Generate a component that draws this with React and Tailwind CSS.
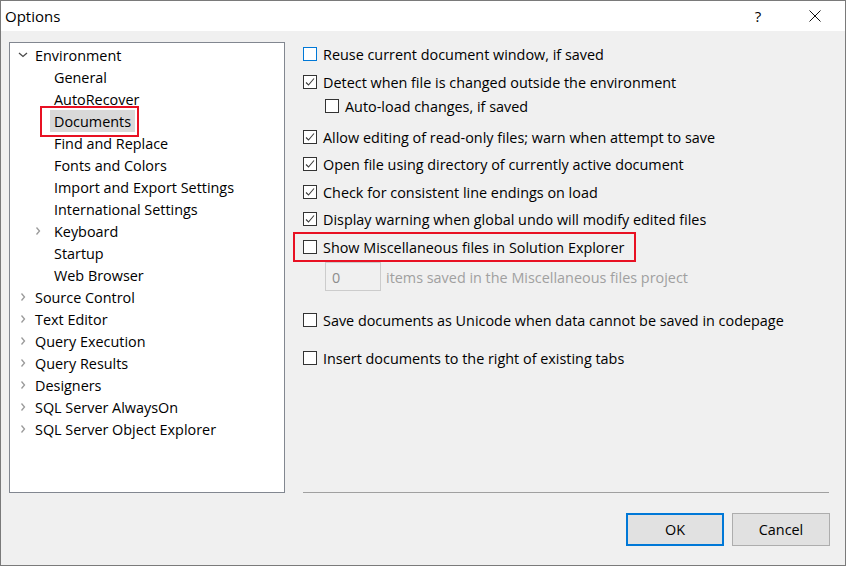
import React from "react";

const font = { fontFamily: '"Open Sans", "Noto Sans", sans-serif' };

function Check({ checked, focus }) {
  return (
    <span
      className={`w-[14px] h-[14px] shrink-0 bg-white border flex items-center justify-center ${
        focus ? "border-[#0078d7]" : "border-[#333333]"
      }`}
    >
      {checked && (
        <svg width="12" height="12" viewBox="0 0 12 12">
          <polyline points="2,6.5 4.5,9 10,2.5" fill="none" stroke="#3c3c3c" strokeWidth="1.1" />
        </svg>
      )}
    </span>
  );
}

function Row({ checked, focus, children, className = "" }) {
  return (
    <div className={`flex items-center h-[22px] gap-[6px] ${className}`}>
      <Check checked={checked} focus={focus} />
      <span className="whitespace-nowrap pt-[2px]">{children}</span>
    </div>
  );
}

function ChevRight() {
  return (
    <svg width="8" height="10" viewBox="0 0 8 10" className="shrink-0">
      <polyline points="2.5,1.5 5.5,5 2.5,8.5" fill="none" stroke="#9a9a9a" strokeWidth="1.3" />
    </svg>
  );
}

function ChevDown() {
  return (
    <svg width="10" height="8" viewBox="0 0 10 8" className="shrink-0">
      <polyline points="1,2 5,5.5 9,2" fill="none" stroke="#4a4a4a" strokeWidth="1.3" />
    </svg>
  );
}

function TopItem({ label, open }) {
  return (
    <div className="flex items-center h-[22px]">
      <span className="w-[25px] flex justify-center pl-[1px]">{open ? <ChevDown /> : <ChevRight />}</span>
      <span className="whitespace-nowrap pt-[2px]">{label}</span>
    </div>
  );
}

function ChildItem({ label, expandable, selected }) {
  return (
    <div className="relative flex items-center h-[22px]">
      <span className="w-[40px] flex justify-end pr-[8px]">{expandable && <ChevRight />}</span>
      <span
        className={`whitespace-nowrap px-[4px] pt-[2px] h-[22px] flex items-center ${selected ? "bg-[#d9d9d9]" : ""}`}
      >
        {label}
      </span>
      {selected && (
        <span className="absolute left-[30px] top-[-4px] w-[99px] h-[31px] border-2 border-[#e81123]" />
      )}
    </div>
  );
}

export default function App() {
  return (
    <div
      className="w-[846px] h-[566px] border border-[#7a7a7a] bg-[#f0f0f0] text-[14.4px] text-black flex flex-col overflow-hidden"
      style={font}
    >
      <div className="h-[30px] bg-white flex items-center justify-between shrink-0">
        <span className="pl-[4px] text-[15px]">Options</span>
        <div className="flex items-center h-full gap-[27px] pr-[15px]">
          <span className="w-[30px] text-center text-[15px]">?</span>
          <span className="w-[30px] flex justify-center">
            <svg width="12" height="12" viewBox="0 0 12 12">
              <path d="M0.5 0.5 L11.5 11.5 M11.5 0.5 L0.5 11.5" stroke="#111" strokeWidth="1" />
            </svg>
          </span>
        </div>
      </div>

      <div className="flex pt-[11px] pl-[8px]">
        <div className="w-[276px] h-[451px] bg-white border border-[#828790] pt-[1px] shrink-0">
          <TopItem label="Environment" open />
          <ChildItem label="General" />
          <ChildItem label="AutoRecover" />
          <ChildItem label="Documents" selected />
          <ChildItem label="Find and Replace" />
          <ChildItem label="Fonts and Colors" />
          <ChildItem label="Import and Export Settings" />
          <ChildItem label="International Settings" />
          <ChildItem label="Keyboard" expandable />
          <ChildItem label="Startup" />
          <ChildItem label="Web Browser" />
          <TopItem label="Source Control" />
          <TopItem label="Text Editor" />
          <TopItem label="Query Execution" />
          <TopItem label="Query Results" />
          <TopItem label="Designers" />
          <TopItem label="SQL Server AlwaysOn" />
          <TopItem label="SQL Server Object Explorer" />
        </div>

        <div className="ml-[18px] w-[527px] h-[451px] flex flex-col">
          <div className="flex flex-col pt-[1px] flex-1">
            <Row focus>Reuse current document window, if saved</Row>
            <Row checked className="mt-[6px]">Detect when file is changed outside the environment</Row>
            <Row className="mt-[2px] ml-[22px]">Auto-load changes, if saved</Row>
            <Row checked className="mt-[9px]">Allow editing of read-only files; warn when attempt to save</Row>
            <Row checked className="mt-[5px]">Open file using directory of currently active document</Row>
            <Row checked className="mt-[6px]">Check for consistent line endings on load</Row>
            <Row checked className="mt-[5px]">Display warning when global undo will modify edited files</Row>
            <div className="relative mt-[6px]">
              <Row>Show Miscellaneous files in Solution Explorer</Row>
              <span className="absolute left-[-10px] top-[-4px] w-[343px] h-[30px] border-2 border-[#e81123]" />
            </div>
            <div className="flex items-center ml-[22px] mt-[4px] gap-[5px]">
              <div className="w-[56px] h-[29px] border border-[#cccccc] bg-[#f0f0f0] flex items-center pl-[6px] pt-[2px] text-[#8d8d8d]">
                0
              </div>
              <span className="text-[#a0a0a0] whitespace-nowrap pt-[2px]">
                items saved in the Miscellaneous files project
              </span>
            </div>
            <Row className="mt-[18px]">Save documents as Unicode when data cannot be saved in codepage</Row>
            <Row className="mt-[16px]">Insert documents to the right of existing tabs</Row>
          </div>
          <div className="h-px bg-[#a0a0a0] w-[526px]" />
        </div>
      </div>

      <div className="flex justify-end gap-[8px] pr-[15px] mt-[20px]">
        <button className="w-[98px] h-[33px] bg-[#e1e1e1] border-2 border-[#0078d7] flex items-center justify-center">
          OK
        </button>
        <button className="w-[98px] h-[33px] bg-[#e1e1e1] border border-[#adadad] flex items-center justify-center">
          Cancel
        </button>
      </div>
    </div>
  );
}
